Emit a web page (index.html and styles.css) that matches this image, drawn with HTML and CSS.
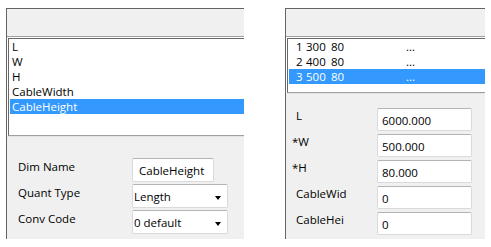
FILE: index.html
```html
<!DOCTYPE html>
<html lang="en">
<head>
    <meta charset="UTF-8">
    <title>Dimensions</title>
    <link rel="stylesheet" href="styles.css">
</head>
<body>
    <div class="screen">
        <section class="panel panel-dims">
            <div class="panel-head"></div>
            <div class="listbox">
                <ul class="list list-dims">
                    <li>L</li>
                    <li>W</li>
                    <li>H</li>
                    <li>CableWidth</li>
                    <li class="selected">CableHeight</li>
                </ul>
            </div>
            <div class="form form-dims">
                <label>Dim Name</label>
                <div class="field text">CableHeight</div>
                <label>Quant Type</label>
                <div class="field combo">Length</div>
                <label>Conv Code</label>
                <div class="field combo">0 default</div>
            </div>
        </section>

        <section class="panel panel-values">
            <div class="panel-head"></div>
            <div class="listbox">
                <ul class="list list-values">
                    <li><span class="c-id">1</span><span class="c-a">300</span><span class="c-b">80</span><span>...</span></li>
                    <li><span class="c-id">2</span><span class="c-a">400</span><span class="c-b">80</span><span>...</span></li>
                    <li class="selected"><span class="c-id">3</span><span class="c-a">500</span><span class="c-b">80</span><span>...</span></li>
                </ul>
            </div>
            <div class="form form-values">
                <label>L</label>
                <div class="field value">6000.000</div>
                <label class="req">*W</label>
                <div class="field value">500.000</div>
                <label class="req">*H</label>
                <div class="field value">80.000</div>
                <label>CableWid</label>
                <div class="field value">0</div>
                <label>CableHei</label>
                <div class="field value">0</div>
            </div>
        </section>
    </div>
</body>
</html>
```

FILE: styles.css
```css
body {
    margin: 0;
    background: #fff;
    font-family: "Open Sans", "Noto Sans", sans-serif;
    font-size: 11.5px;
    color: #000;
}

.screen {
    display: flex;
    gap: 41px;
    padding: 8px 0 0 6px;
}

.panel {
    display: flex;
    flex-direction: column;
    height: 230px;
    background: #f0f0f0;
    border-top: 1px solid #646464;
    border-left: 1px solid #646464;
}

.panel-dims {
    width: 237px;
}

.panel-values {
    width: 199px;
}

.panel-head {
    height: 27px;
    border-bottom: 1px solid #a0a0a0;
}

.listbox {
    background: #fff;
    padding: 1px 0 0 1px;
    border-bottom: 1px solid #e3e3e3;
}

.list {
    list-style: none;
    margin: 0;
    padding: 0 0 0 1px;
    border-top: 1px solid #696969;
    border-left: 1px solid #696969;
    border-bottom: 1px solid #a0a0a0;
    line-height: 15px;
}

.list li {
    height: 15px;
    white-space: nowrap;
}

.list .selected {
    background: #3399ff;
    color: #fff;
}

.list-dims {
    height: 96px;
}

.list-dims li {
    padding-left: 2px;
}

.list-values {
    height: 53px;
}

.list-values li {
    display: flex;
    padding-left: 7px;
}

.c-id {
    width: 10px;
}

.c-a {
    width: 25px;
}

.c-b {
    width: 75px;
}

.form {
    display: grid;
    align-items: start;
}

.form label {
    line-height: 14px;
}

.form-dims {
    grid-template-columns: 114px auto;
    row-gap: 2px;
    padding: 21px 0 0 11px;
}

.form-dims label {
    padding-top: 2px;
}

.form-values {
    grid-template-columns: 81px 95px;
    row-gap: 3px;
    padding: 14px 0 0 10px;
}

.form-values label {
    padding-top: 1px;
}

.form-values .req {
    margin-left: -4px;
}

.field {
    box-sizing: border-box;
    display: flex;
    align-items: center;
    background: #fff;
    border: 1px solid #dadada;
    border-top-color: #b4b4b4;
    border-radius: 2px;
    white-space: nowrap;
}

.field.text {
    width: 82px;
    height: 24px;
    padding-left: 6px;
}

.field.combo {
    width: 96px;
    height: 24px;
    padding: 1px 0 0 1px;
}

.field.combo::after {
    content: "";
    margin: 2px 6px 0 auto;
    border-left: 3.5px solid transparent;
    border-right: 3.5px solid transparent;
    border-top: 4px solid #000;
}

.field.value {
    height: 23px;
    padding: 1px 0 0 4px;
}
```
